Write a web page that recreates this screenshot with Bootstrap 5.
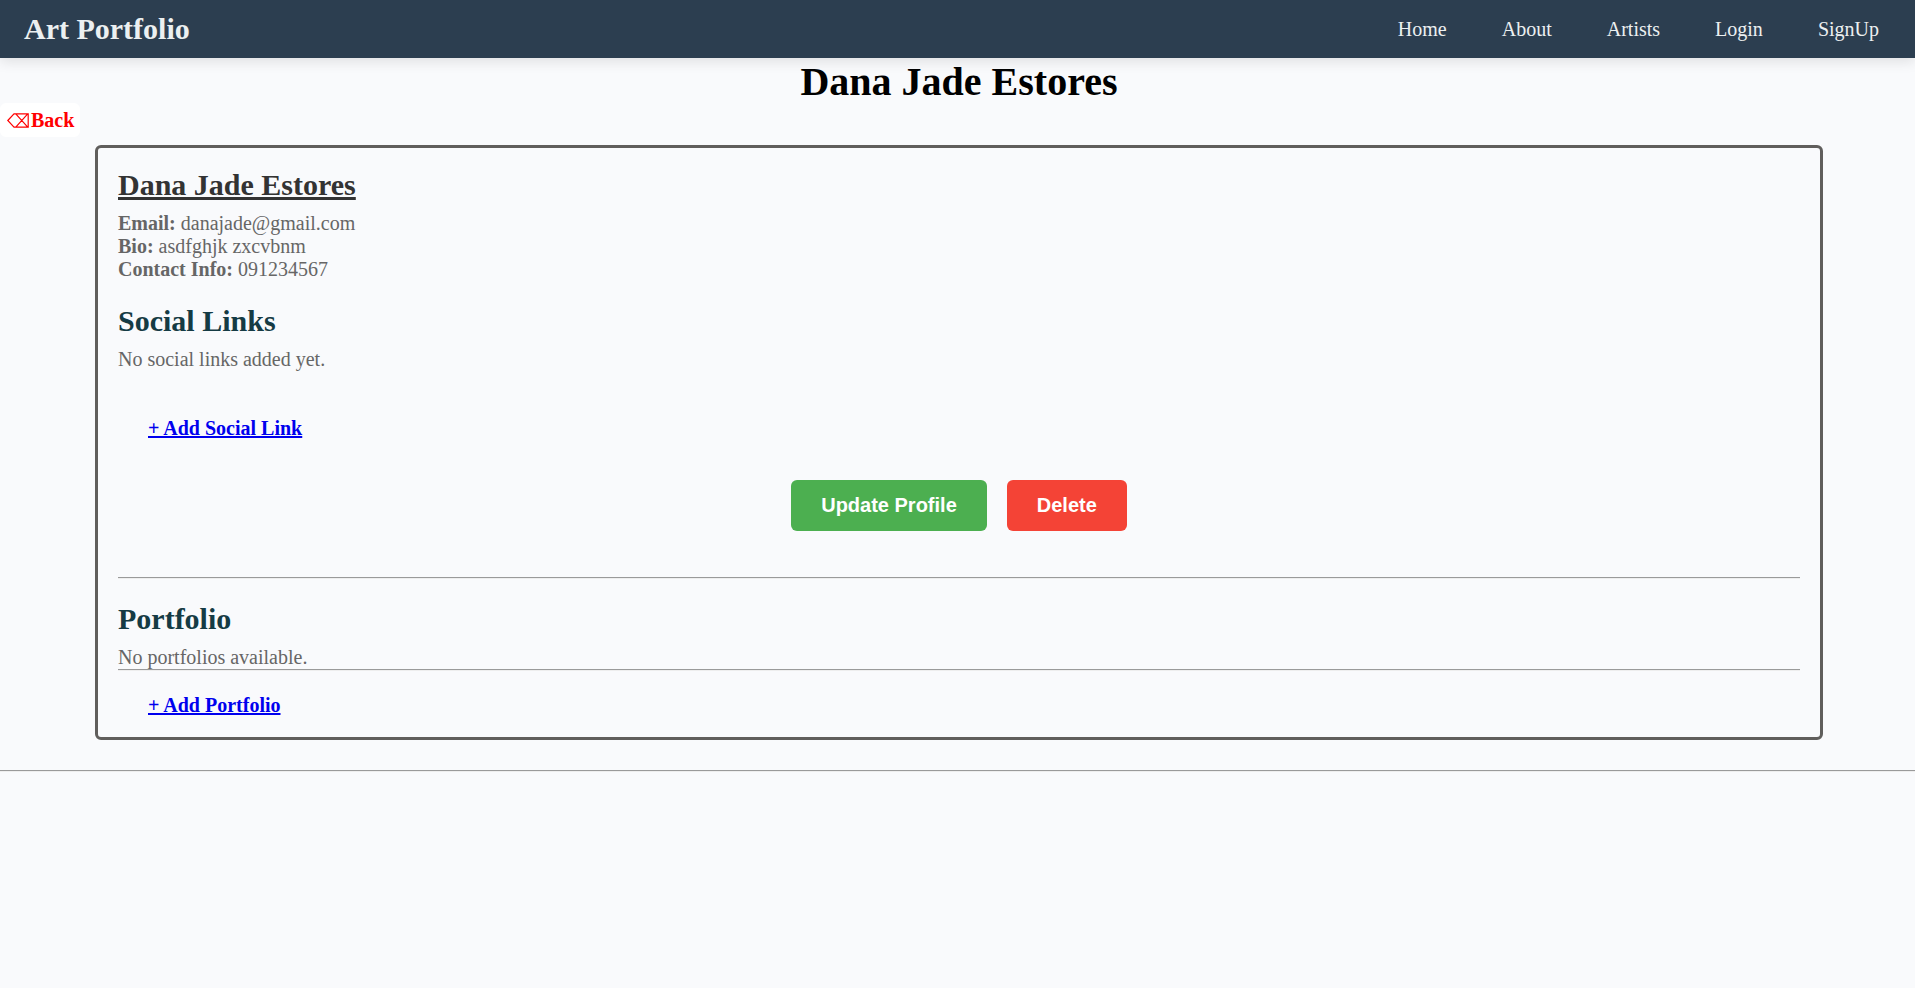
<!DOCTYPE html>
<html lang="en">
<head>
<meta charset="utf-8">
<meta name="viewport" content="width=device-width, initial-scale=1">
<title>Art Portfolio</title>
<link href="https://cdn.jsdelivr.net/npm/bootstrap@5.3.0/dist/css/bootstrap.min.css" rel="stylesheet">
<style>
body{background:#f9fafc;color:#666;font-family:"Liberation Serif","Times New Roman",serif;font-size:20px;line-height:23px}
.site-nav{background:#2c3e50;min-height:58px;padding:0 24px;box-shadow:0 4px 12px rgba(0,0,0,.1)}
.site-nav .navbar-brand{color:#ecf0f1;font-size:30px;line-height:34px;font-weight:700;padding:0;margin:0}
.site-nav .navbar-nav{gap:31px}
.site-nav .navbar-nav .nav-link{color:#ecf0f1;padding:0 12px}
.page-title{color:#000;font-size:40px;line-height:42px;font-weight:700;margin:0;padding:3px 0 0 3px}
.back-link{background:#fff;color:red;font-weight:700;border-radius:6px;height:34px;width:80px;padding-left:7px;gap:2px}
.back-link:hover{color:red}
.profile{border:3px solid #605e5c;border-radius:6px;padding:20px;margin:8px 92px 30px 95px}
.profile h2{font-size:30px;line-height:34px;font-weight:700;margin:0 0 10px;color:#153b44}
.profile .artist{color:#333;text-decoration:underline}
.profile .social,.profile .works{margin-top:23px}
.profile p{margin:0}
.add-link{color:#00e;font-weight:700;margin-left:30px}
.add-social{margin-top:46px}
.add-work{margin-top:23px}
.actions{gap:20px;margin:40px 0 46px}
.action{font:700 20px/23px "Liberation Sans",Arial,sans-serif;color:#fff;border:0;border-radius:6px;padding:14px 30px}
.update{background:#4caf50}
.delete{background:#f44336}
.rule{border:0;border-top:1px solid #9a9a9a;border-bottom:1px solid #eee;opacity:1;margin:0}
</style>
<script src="https://cdn.jsdelivr.net/npm/bootstrap@5.3.0/dist/js/bootstrap.bundle.min.js"></script>
</head>
<body>
<nav class="site-nav navbar navbar-expand">
  <a class="navbar-brand" href="#">Art Portfolio</a>
  <ul class="navbar-nav ms-auto">
    <li class="nav-item"><a class="nav-link" href="#">Home</a></li>
    <li class="nav-item"><a class="nav-link" href="#">About</a></li>
    <li class="nav-item"><a class="nav-link" href="#">Artists</a></li>
    <li class="nav-item"><a class="nav-link" href="#">Login</a></li>
    <li class="nav-item"><a class="nav-link" href="#">SignUp</a></li>
  </ul>
</nav>
<main>
  <h1 class="page-title text-center">Dana Jade Estores</h1>
  <a class="back-link d-flex align-items-center text-decoration-none" href="#"><svg width="22" height="15" viewBox="0 0 22 15" fill="none" stroke="red" stroke-width="1.2" aria-hidden="true"><path d="M.8 7.5 7 .8H21.2V14.2H7ZM9 1.2 20.5 13.8M9 13.8 20.5 1.2"/></svg><span>Back</span></a>
  <section class="profile">
    <h2 class="artist">Dana Jade Estores</h2>
    <p><strong>Email:</strong> danajade@gmail.com</p>
    <p><strong>Bio:</strong> asdfghjk zxcvbnm</p>
    <p><strong>Contact Info:</strong> 091234567</p>
    <h2 class="social">Social Links</h2>
    <p>No social links added yet.</p>
    <div class="add-social"><a class="add-link" href="#">+ Add Social Link</a></div>
    <div class="actions d-flex justify-content-center">
      <button class="action update" type="button">Update Profile</button>
      <button class="action delete" type="button">Delete</button>
    </div>
    <hr class="rule">
    <h2 class="works">Portfolio</h2>
    <p>No portfolios available.</p>
    <hr class="rule">
    <div class="add-work"><a class="add-link" href="#">+ Add Portfolio</a></div>
  </section>
  <hr class="rule">
</main>
</body>
</html>
